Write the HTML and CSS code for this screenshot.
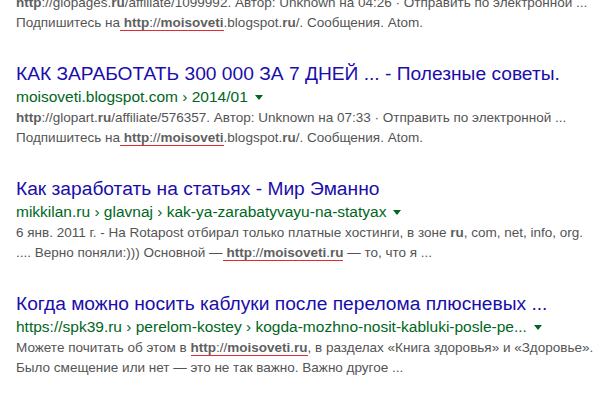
FILE: index.html
```html
<!DOCTYPE html>
<html lang="ru">
<head>
<meta charset="utf-8">
<link rel="stylesheet" href="styles.css">
</head>
<body>
<div class="results">
  <div class="snippet first">
    <b>http</b>://glopages.<b>ru</b>/affiliate/1099992. Автор: Unknown на 04:26 · Отправить по электронной ...<br>
    Подпишитесь на<span class="mark"> <b>http</b>://<b>moisoveti</b></span>.blogspot.<b>ru</b>/. Сообщения. Atom.
  </div>

  <div class="result">
    <h3 class="title">КАК ЗАРАБОТАТЬ 300 000 ЗА 7 ДНЕЙ ... - Полезные советы.</h3>
    <div class="url">moisoveti.blogspot.com › 2014/01<span class="caret"></span></div>
    <div class="snippet">
      <b>http</b>://glopart.<b>ru</b>/affiliate/576357. Автор: Unknown на 07:33 · Отправить по электронной ...<br>
      Подпишитесь на<span class="mark"> <b>http</b>://<b>moisoveti</b></span>.blogspot.<b>ru</b>/. Сообщения. Atom.
    </div>
  </div>

  <div class="result">
    <h3 class="title">Как заработать на статьях - Мир Эманно</h3>
    <div class="url">mikkilan.ru › glavnaj › kak-ya-zarabatyvayu-na-statyax<span class="caret"></span></div>
    <div class="snippet">
      6 янв. 2011 г. - На Rotapost отбирал только платные хостинги, в зоне <b>ru</b>, com, net, info, org.<br>
      .... Верно поняли:))) Основной —<span class="mark"> <b>http</b>://<b>moisoveti</b>.<b>ru</b></span> — то, что я ...
    </div>
  </div>

  <div class="result">
    <h3 class="title">Когда можно носить каблуки после перелома плюсневых ...</h3>
    <div class="url">https://spk39.ru › perelom-kostey › kogda-mozhno-nosit-kabluki-posle-pe...<span class="caret"></span></div>
    <div class="snippet">
      Можете почитать об этом в <span class="mark"><b>http</b>://<b>moisoveti</b>.<b>ru</b></span>, в разделах «Книга здоровья» и «Здоровье».<br>
      Было смещение или нет — это не так важно. Важно другое ...
    </div>
  </div>
</div>
</body>
</html>
```

FILE: styles.css
```css
html, body {
  margin: 0;
  padding: 0;
  background: #ffffff;
}

body {
  font-family: "Liberation Sans", Arial, sans-serif;
  overflow: hidden;
}

.results {
  padding-left: 16px;
}

.snippet {
  font-size: 13.5px;
  line-height: 20px;
  color: #545454;
  white-space: nowrap;
}

.snippet b {
  color: #5f5f5f;
  font-weight: bold;
}

.snippet.first {
  margin-top: -7px;
}

.result {
  margin-top: 29px;
}

.title {
  margin: 0;
  font-size: 19.2px;
  font-weight: normal;
  line-height: 24px;
  color: #1a0dab;
  white-space: nowrap;
}

.url {
  font-size: 15.5px;
  line-height: 22px;
  color: #006621;
  white-space: nowrap;
}

.caret {
  display: inline-block;
  margin-left: 7px;
  width: 0;
  height: 0;
  border-top: 5px solid #006621;
  border-left: 4px solid transparent;
  border-right: 4px solid transparent;
  vertical-align: middle;
}

.mark {
  border-bottom: 1px solid #e02a34;
}
```
